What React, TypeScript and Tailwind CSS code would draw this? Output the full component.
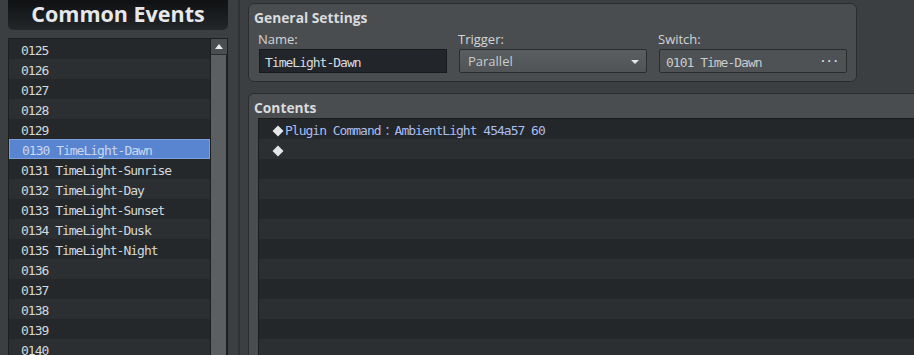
import React from 'react'

const mono = "font-['DejaVu_Sans_Mono',monospace] text-[13px] tracking-[-1px]"
const sans = "font-['Open_Sans',sans-serif]"

const events: [string, string][] = [
  ['0125', ''],
  ['0126', ''],
  ['0127', ''],
  ['0128', ''],
  ['0129', ''],
  ['0130', 'TimeLight-Dawn'],
  ['0131', 'TimeLight-Sunrise'],
  ['0132', 'TimeLight-Day'],
  ['0133', 'TimeLight-Sunset'],
  ['0134', 'TimeLight-Dusk'],
  ['0135', 'TimeLight-Night'],
  ['0136', ''],
  ['0137', ''],
  ['0138', ''],
  ['0139', ''],
  ['0140', ''],
]

function Diamond() {
  return (
    <svg width="12" height="12" viewBox="0 0 12 12" className="shrink-0">
      <path d="M6 0.5 L11.5 6 L6 11.5 L0.5 6 Z" fill="#e4e6e8" />
    </svg>
  )
}

function EventList() {
  return (
    <div className="mt-2 flex flex-1 border border-[#1c1e20] border-b-0 min-h-0">
      <div className="flex-1 flex flex-col overflow-hidden">
        {events.map(([id, name], i) => {
          const selected = id === '0130'
          return (
            <div
              key={id}
              className={`h-[20px] shrink-0 flex items-center pl-[12px] pt-[3px] whitespace-pre ${mono} ${
                selected
                  ? 'bg-[#5984cf] border border-[#7b9fdd] pl-[11px] text-[#c9d7ef]'
                  : i % 2 === 0
                    ? 'bg-[#25282a] text-[#d4d9dc]'
                    : 'bg-[#2c2f32] text-[#d4d9dc]'
              }`}
            >
              {name ? `${id} ${name}` : id}
            </div>
          )
        })}
      </div>
      <div className="w-[17px] flex flex-col border-l border-[#1c1e20] bg-[#5b5f62]">
        <div className="h-[16px] bg-[#4a4e51] border-b border-[#2a2c2e] flex items-center justify-center">
          <svg width="8" height="5" viewBox="0 0 8 5">
            <path d="M4 0 L8 5 L0 5 Z" fill="#e8eaec" />
          </svg>
        </div>
        <div className="flex-1 border-r border-[#1c1e20]" />
      </div>
    </div>
  )
}

function Field({ label, children }: { label: string; children: React.ReactNode }) {
  return (
    <div className="w-[188px] flex flex-col">
      <div className={`h-[18px] -ml-px pt-[2px] flex items-center text-[13px] text-[#d2d5d7] ${sans}`}>{label}</div>
      <div className="mt-[1px] h-[24px]">{children}</div>
    </div>
  )
}

export default function App() {
  return (
    <div className="w-[914px] h-[355px] bg-[#3c3f42] flex overflow-hidden">
      {/* left: common events list */}
      <div className="w-[238px] shrink-0 flex flex-col pl-2 pr-[10px]">
        <div
          className={`h-[30px] shrink-0 rounded-b-[5px] bg-gradient-to-b from-[#0f1113] to-[#24272a] flex items-center justify-center pb-[2px] leading-[24px] text-[21.5px] font-bold text-[#e6e8ea] ${sans}`}
        >
          Common Events
        </div>
        <EventList />
      </div>
      <div className="w-[2px] shrink-0 bg-[#303235]" />

      {/* right: editor */}
      <div className="flex-1 flex flex-col pl-2 pt-[3px] min-w-0">
        <div className="w-[609px] h-[79px] shrink-0 rounded-[6px] border border-[#2a2c2e] bg-[#4a4d50] flex flex-col">
          <div className={`h-[20px] mt-[4px] pl-[5px] flex items-center text-[13.8px] font-bold text-[#d9dbdd] ${sans}`}>
            General Settings
          </div>
          <div className="mt-[2px] pl-[10px] flex gap-[12px]">
            <Field label="Name:">
              <div className={`h-full border border-[#17191b] bg-[#22262a] flex items-center pl-[5px] pt-[3px] text-[#d8dde0] ${mono}`}>
                TimeLight-Dawn
              </div>
            </Field>
            <Field label="Trigger:">
              <div className={`h-full rounded-[2px] border border-[#2a2c2e] bg-gradient-to-b from-[#5a5e61] to-[#505457] flex items-center pl-[8px] pr-[7px] pt-[1px] text-[13px] text-[#c9ccce] ${sans}`}>
                <span className="flex-1">Parallel</span>
                <svg width="8" height="4" viewBox="0 0 8 4">
                  <path d="M0 0 L8 0 L4 4 Z" fill="#e4e6e8" />
                </svg>
              </div>
            </Field>
            <Field label="Switch:">
              <div className={`h-full rounded-[2px] border border-[#2a2c2e] bg-[#4e5255] flex items-center pl-[6px] pr-[8px] pt-[3px] text-[#c8ccd0] ${mono}`}>
                <span className="flex-1">0101 Time-Dawn</span>
                <span className="text-[#dfe1e3] tracking-[-1.5px] -mt-[4px]">···</span>
              </div>
            </Field>
          </div>
        </div>

        <div className="mt-[11px] flex-1 -mr-[12px] rounded-t-[6px] border border-b-0 border-[#2a2c2e] bg-[#4a4d50] flex flex-col min-h-0">
          <div className={`h-[24px] shrink-0 pl-[5px] pt-[4px] flex items-center text-[13.8px] font-bold text-[#d9dbdd] ${sans}`}>
            Contents
          </div>
          <div className="ml-[9px] flex-1 border-t border-l border-[#1a1c1e] flex flex-col overflow-hidden">
            {Array.from({ length: 12 }).map((_, i) => (
              <div
                key={i}
                className={`h-[20px] shrink-0 flex items-center pl-[13px] pt-[3px] ${i % 2 === 0 ? 'bg-[#24272a]' : 'bg-[#2c2f32]'}`}
              >
                {i === 0 && (
                  <>
                    <Diamond />
                    <span className={`ml-px text-[#aabdf0] whitespace-pre ${mono}`}>Plugin Command</span>
                    <span className="text-[#aabdf0] text-[12px] w-[14px] text-center font-['Noto_Sans_CJK_JP',sans-serif]">：</span>
                    <span className={`text-[#aabdf0] whitespace-pre ${mono}`}>AmbientLight 454a57 60</span>
                  </>
                )}
                {i === 1 && <Diamond />}
              </div>
            ))}
          </div>
        </div>
      </div>
    </div>
  )
}
